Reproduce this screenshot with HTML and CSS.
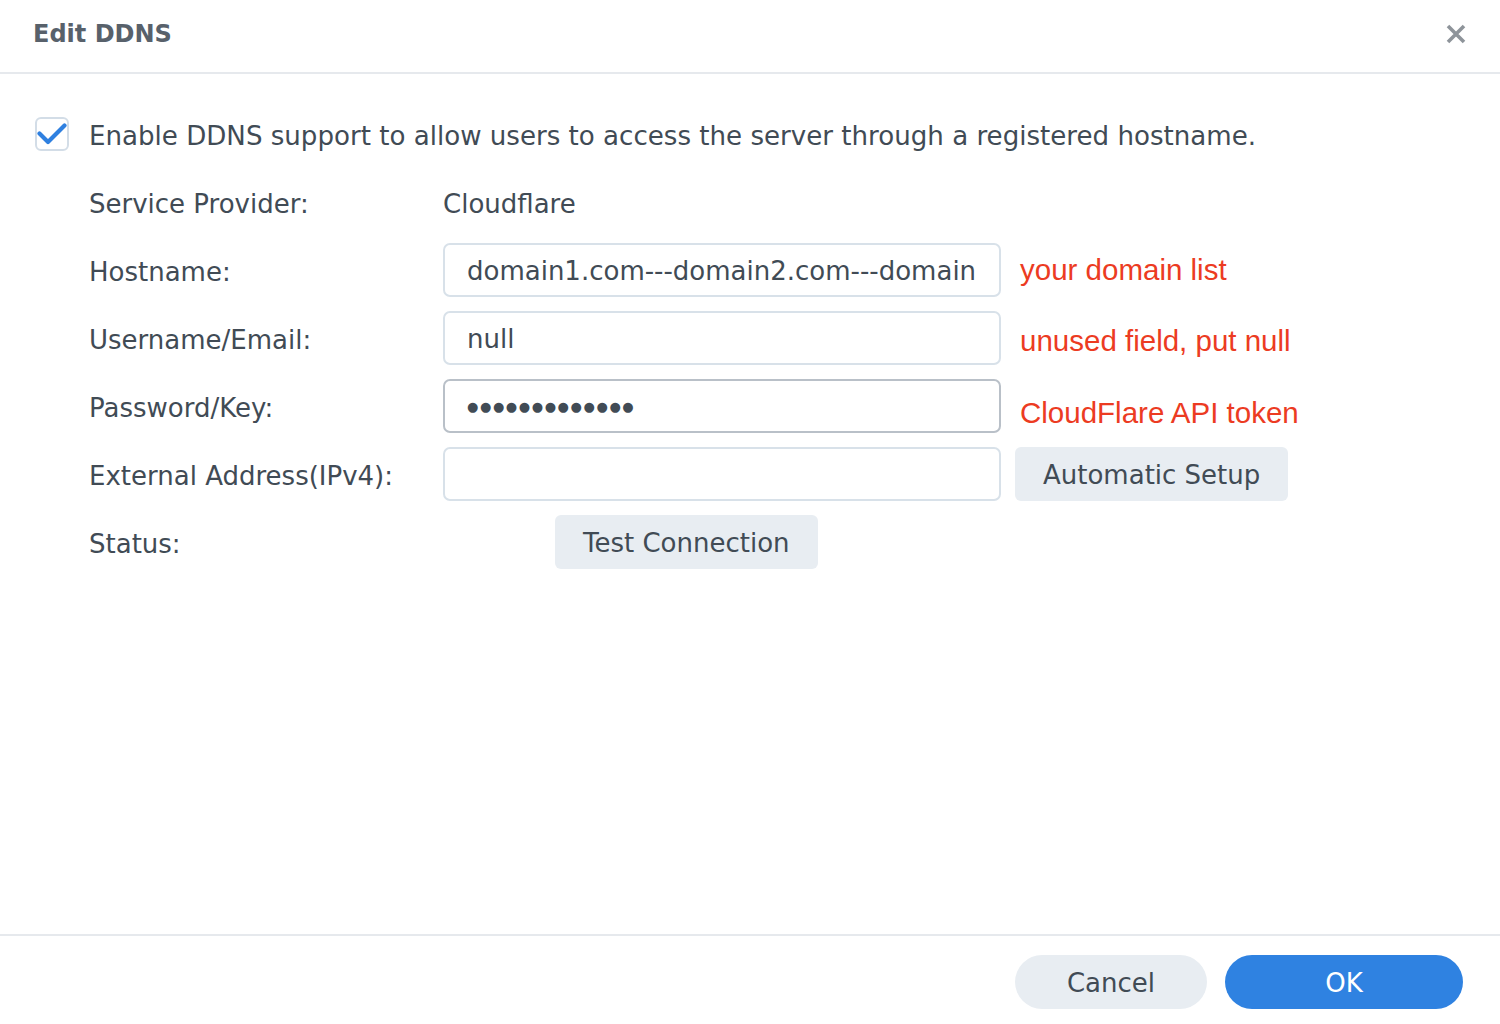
FILE: index.html
```html
<!DOCTYPE html>
<html lang="en">
<head>
<meta charset="utf-8">
<title>Edit DDNS</title>
<link rel="stylesheet" href="styles.css">
</head>
<body>
<div class="dialog">
  <header class="hdr">
    <h1 class="title">Edit DDNS</h1>
    <button class="close" aria-label="Close">
      <svg width="20" height="20" viewBox="0 0 20 20"><path d="M2 2 L18 18 M18 2 L2 18" stroke="#8e949a" stroke-width="3.6" stroke-linecap="butt" fill="none"/></svg>
    </button>
  </header>
  <main class="content">
    <label class="enable">
      <span class="cb">
        <svg width="34" height="34" viewBox="0 0 34 34"><path d="M4.5 16.5 L13 25 L29.5 8.5" stroke="#2f80e0" stroke-width="4.2" stroke-linecap="round" stroke-linejoin="round" fill="none"/></svg>
      </span>
      <span class="enable-text">Enable DDNS support to allow users to access the server through a registered hostname.</span>
    </label>
    <div class="form">
      <div class="lbl">Service Provider:</div>
      <div class="val">Cloudflare</div>
      <div class="note"></div>

      <div class="lbl">Hostname:</div>
      <input class="field" type="text" value="domain1.com---domain2.com---domain3.com">
      <div class="note">your domain list</div>

      <div class="lbl">Username/Email:</div>
      <input class="field" type="text" value="null">
      <div class="note note-low">unused field, put null</div>

      <div class="lbl">Password/Key:</div>
      <div class="field field-dark"><span class="dots">●●●●●●●●●●●●●</span></div>
      <div class="note note-lower">CloudFlare API token</div>

      <div class="lbl">External Address(IPv4):</div>
      <input class="field" type="text" value="">
      <div class="note"><button class="btn-grey">Automatic Setup</button></div>

      <div class="lbl">Status:</div>
      <div class="val"><button class="btn-grey btn-test">Test Connection</button></div>
      <div class="note"></div>
    </div>
  </main>
  <footer class="ftr">
    <button class="pill pill-grey">Cancel</button>
    <button class="pill pill-blue">OK</button>
  </footer>
</div>
</body>
</html>
```

FILE: styles.css
```css
* { box-sizing: border-box; }
html, body { margin: 0; padding: 0; background: #ffffff; }
body {
  font-family: "DejaVu Sans", Verdana, sans-serif;
  color: #414b55;
}
.dialog {
  height: 1024px;
  display: flex;
  flex-direction: column;
}
.hdr {
  height: 74px;
  border-bottom: 2px solid #e6e9ed;
  display: flex;
  align-items: center;
  justify-content: space-between;
  padding: 0 34px 4px 33px;
}
.title {
  margin: 0;
  font-size: 24px;
  font-weight: bold;
  color: #58616b;
}
.close {
  border: 0;
  background: none;
  padding: 0;
  width: 20px;
  height: 20px;
  display: flex;
}
.content {
  flex: 1;
  padding: 43px 0 0 35px;
}
.enable {
  display: flex;
  align-items: center;
  gap: 20px;
  height: 34px;
}
.cb {
  width: 34px;
  height: 34px;
  border: 2px solid #d3dde7;
  border-radius: 6px;
  display: flex;
  align-items: center;
  justify-content: center;
  overflow: hidden;
}
.cb svg { display: block; flex: none; }
.enable-text { font-size: 26.1px; padding-top: 3px; }
.form {
  margin-top: 24px;
  margin-left: 54px;
  display: grid;
  grid-template-columns: 340px 558px auto;
  grid-auto-rows: 54px;
  row-gap: 14px;
  column-gap: 14px;
  font-size: 26px;
  align-items: center;
}
.lbl, .val { white-space: nowrap; }
.lbl { padding-top: 3px; }
.val { padding-top: 3px; }
.val:has(.btn-test) { padding-top: 0; }
.field {
  height: 54px;
  width: 558px;
  border: 2px solid #d8e1e9;
  border-radius: 7px;
  padding: 2px 22px 0;
  font: inherit;
  font-size: 26px;
  color: #414b55;
  background: #fff;
  outline: none;
  display: flex;
  align-items: center;
}
.field-dark { border-color: #b9c0c8; padding-top: 0; }
.dots {
  font-family: "DejaVu Sans", sans-serif;
  font-size: 13px;
  letter-spacing: 1.6px;
  color: #414b55;
}
.note {
  font-family: "Liberation Sans", Arial, sans-serif;
  font-size: 29.5px;
  color: #ec3b22;
  padding-left: 5px;
  white-space: nowrap;
}
.note-low { padding-top: 6px; }
.note-lower { padding-top: 14px; }
.note:has(.btn-grey) { padding-left: 0; }
.btn-grey {
  height: 54px;
  border: 0;
  border-radius: 6px;
  background: #e8edf2;
  color: #414b55;
  font-family: "DejaVu Sans", Verdana, sans-serif;
  font-size: 26px;
  padding: 2px 28px 0;
}
.btn-test { margin-left: 112px; }
.ftr {
  height: 90px;
  border-top: 2px solid #e6e9ed;
  display: flex;
  justify-content: flex-end;
  align-items: flex-start;
  gap: 18px;
  padding: 19px 37px 0 0;
}
.pill {
  height: 54px;
  border: 0;
  border-radius: 27px;
  font-family: "DejaVu Sans", Verdana, sans-serif;
  font-size: 26px;
  padding-top: 2px;
}
.pill-grey { width: 192px; background: #e8edf2; color: #414b55; }
.pill-blue { width: 238px; background: #2f82e1; color: #ffffff; }
```
